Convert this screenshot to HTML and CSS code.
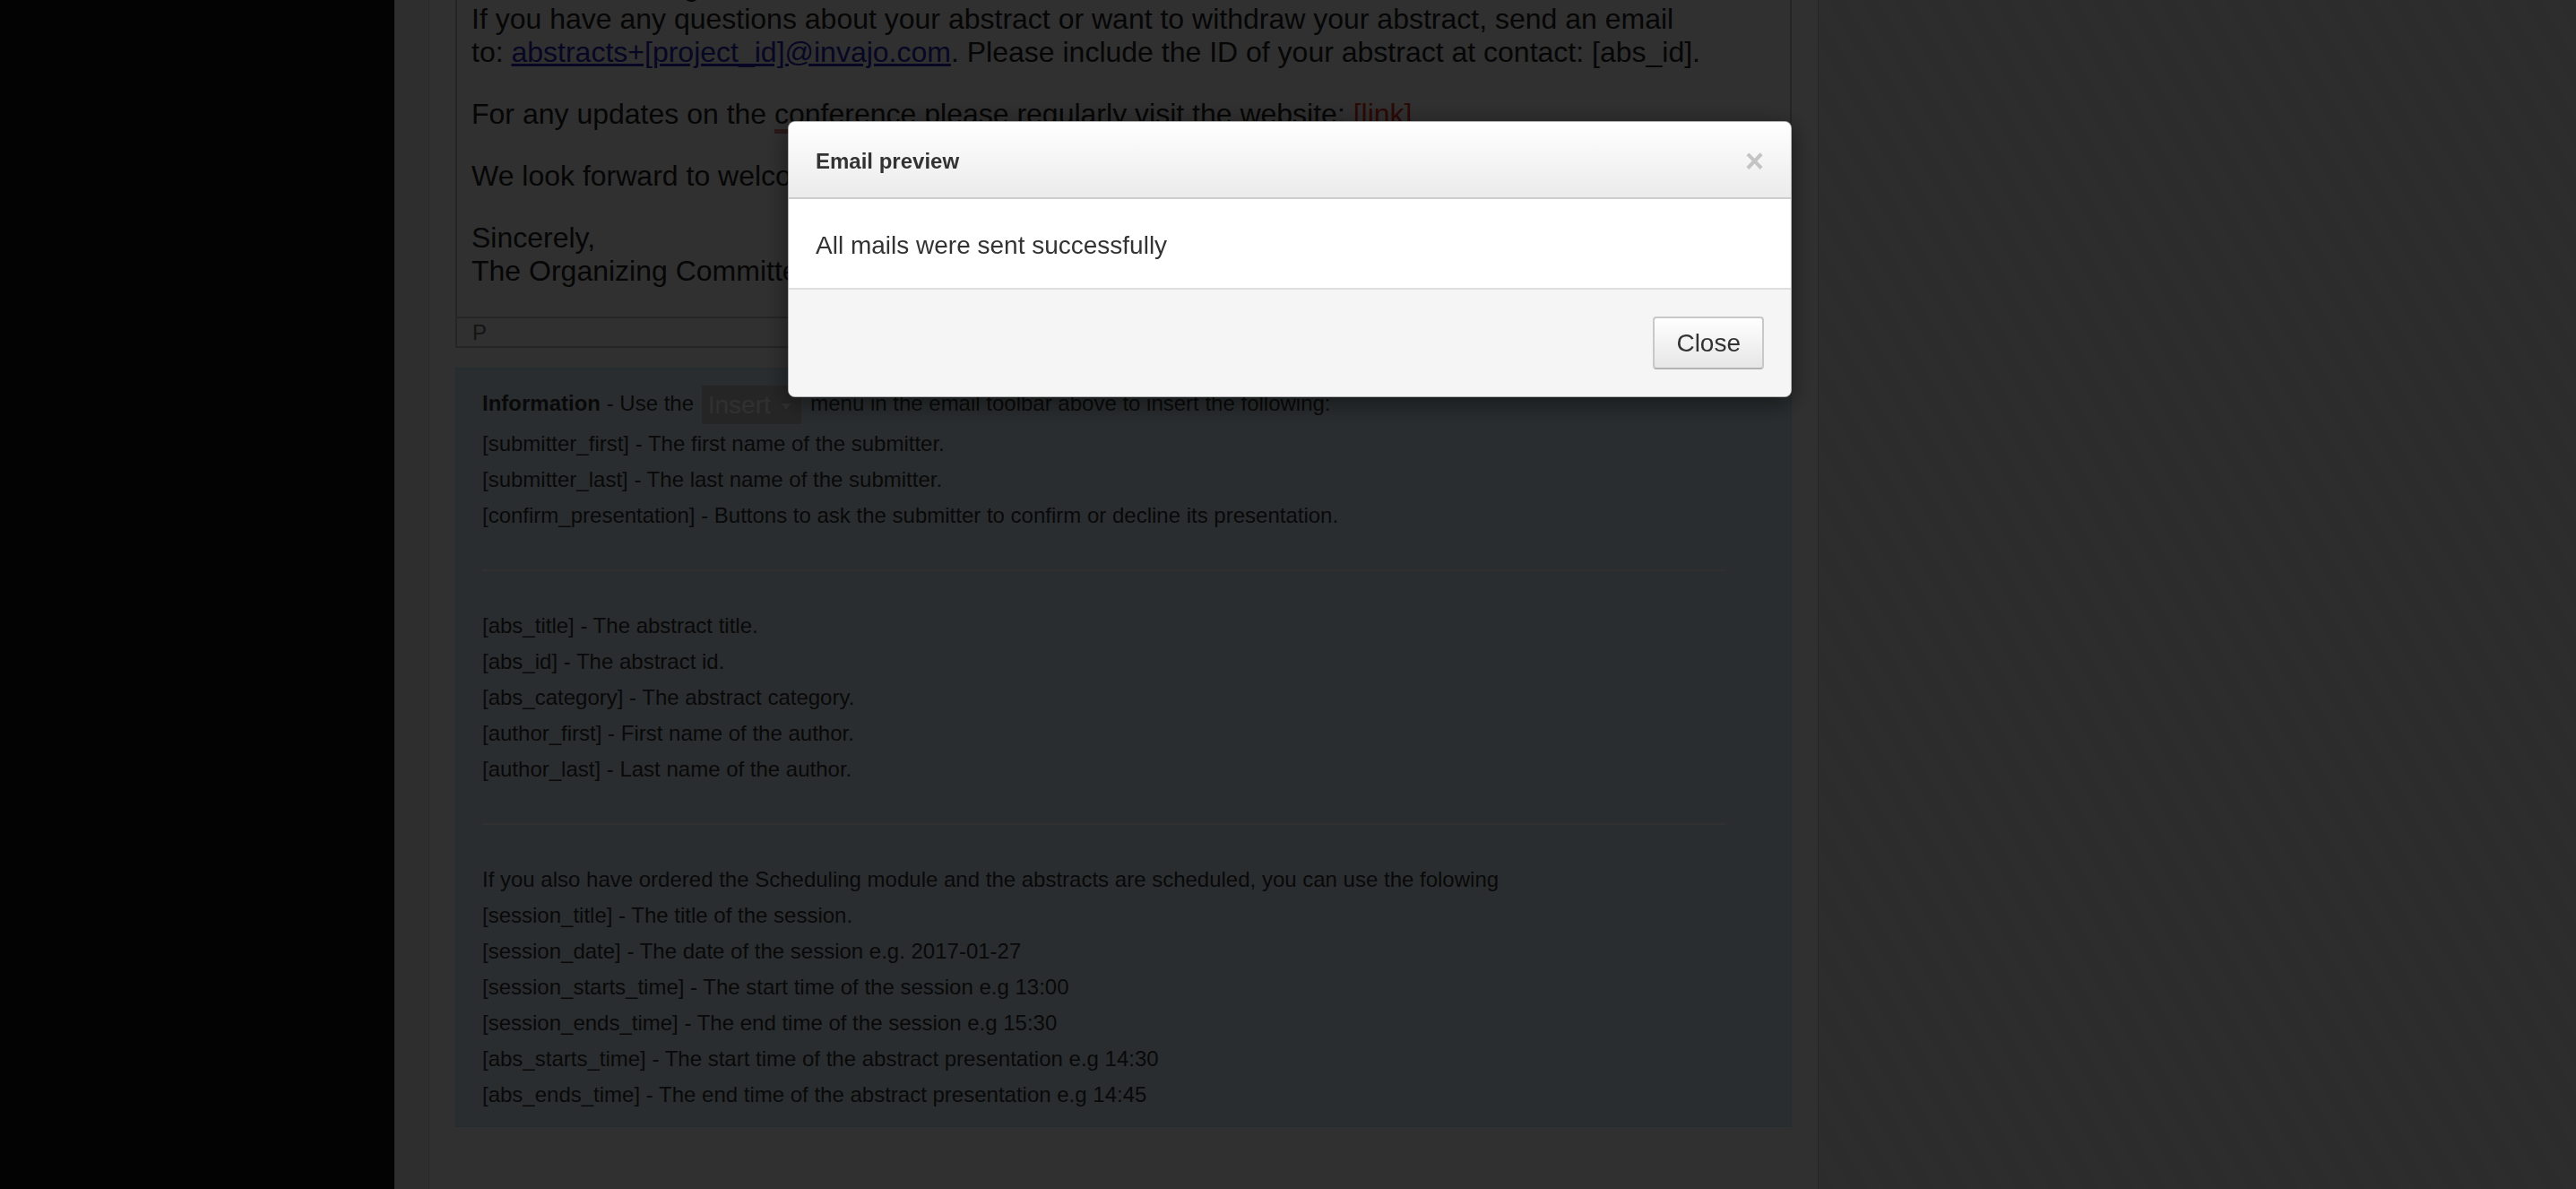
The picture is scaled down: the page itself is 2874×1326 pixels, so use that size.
FILE: index.html
```html
<!DOCTYPE html>
<html lang="en">
<head>
  <meta charset="UTF-8">
  <meta name="viewport" content="width=device-width, initial-scale=1.0">
  <title>Abstract emails</title>
  <link rel="stylesheet" href="styles.css">
</head>
<body>
<div class="layout">
  <aside class="sidebar"></aside>
  <div class="side-strip"></div>

  <main class="main">
    <div class="page">
      <div class="editor">
        <div class="editor-toolbar"></div>
        <div class="editor-body">
          <p>Dear [submitter_first],</p>
          <p>Thank you for submitting your abstract to our conference.<br>
            Final results are given at the conference.<br>
            If you have any questions about your abstract or want to withdraw your abstract, send an email<br>
            to: <a href="#" class="mail-link">abstracts+[project_id]@invajo.com</a>. Please include the ID of your abstract at contact: [abs_id].</p>
          <p>For any updates on the <span class="spell">conference</span> please regularly visit the website: <a href="#" class="red-link">[link]</a></p>
          <p>We look forward to welcoming you at the conference.</p>
          <p>Sincerely,<br>The Organizing Committee</p>
        </div>
        <div class="editor-status">P</div>
      </div>

      <div class="info-box">
        <div class="info-line info-head"><b>Information</b> - Use the <span class="insert-btn">Insert <span class="caret"></span></span> menu in the email toolbar above to insert the following:</div>
        <div class="info-line">[submitter_first] - The first name of the submitter.</div>
        <div class="info-line">[submitter_last] - The last name of the submitter.</div>
        <div class="info-line">[confirm_presentation] - Buttons to ask the submitter to confirm or decline its presentation.</div>
        <hr class="info-divider">
        <div class="info-line">[abs_title] - The abstract title.</div>
        <div class="info-line">[abs_id] - The abstract id.</div>
        <div class="info-line">[abs_category] - The abstract category.</div>
        <div class="info-line">[author_first] - First name of the author.</div>
        <div class="info-line">[author_last] - Last name of the author.</div>
        <hr class="info-divider">
        <div class="info-line">If you also have ordered the Scheduling module and the abstracts are scheduled, you can use the folowing</div>
        <div class="info-line">[session_title] - The title of the session.</div>
        <div class="info-line">[session_date] - The date of the session e.g. 2017-01-27</div>
        <div class="info-line">[session_starts_time] - The start time of the session e.g 13:00</div>
        <div class="info-line">[session_ends_time] - The end time of the session e.g 15:30</div>
        <div class="info-line">[abs_starts_time] - The start time of the abstract presentation e.g 14:30</div>
        <div class="info-line">[abs_ends_time] - The end time of the abstract presentation e.g 14:45</div>
      </div>
    </div>
  </main>

  <div class="outer-bg"></div>
</div>

<div class="modal-backdrop"></div>

<div class="modal-wrap">
  <div class="modal">
    <div class="modal-header">
      <h3 class="modal-title">Email preview</h3>
      <span class="modal-close">&times;</span>
    </div>
    <div class="modal-body">All mails were sent successfully</div>
    <div class="modal-footer">
      <button class="btn">Close</button>
    </div>
  </div>
</div>
</body>
</html>
```

FILE: styles.css
```css
* {
  box-sizing: border-box;
  margin: 0;
  padding: 0;
}
:root {
  --text-color: #333333;
  --editor-text: #222222;
  --editor-border: #c2c2c2;
  --info-bg: #d9edf7;
  --info-border: #bce8f1;
  --white: #ffffff;
}

html, body {
  height: 100%;
}

body {
  font-family: "Liberation Sans", Arial, Helvetica, sans-serif;
  color: var(--text-color);
  background-color: #ededed;
  overflow: hidden;
}

.layout {
  display: flex;
  height: 100vh;
}

.sidebar {
  flex: 0 0 440px;
  background-color: #101010;
}

.side-strip {
  flex: 0 0 39px;
  background-color: #f2f2f2;
  border-right: 1px solid #d0d0d0;
}

.main {
  flex: 0 0 1550px;
  background-color: var(--white);
  border-right: 1px solid #c8c8c8;
  padding: 0 29px;
}

/* page is scrolled down, editor top is out of view */
.page {
  margin-top: -220px;
}

.outer-bg {
  flex: 1;
  background: repeating-linear-gradient(60deg, #ebebeb 0 16px, #ededed 16px 32px);
}

/* Email editor */
.editor {
  border: 2px solid var(--editor-border);
  background-color: #fcfcfc;
}

.editor-toolbar {
  height: 46px;
  border-bottom: 2px solid var(--editor-border);
}

.editor-body {
  display: flow-root;
  padding: 0 16px;
  font-size: 32px;
  line-height: 37px;
  color: var(--editor-text);
}

.editor-body p {
  margin: 32px 0;
}

.mail-link {
  color: #2a26b8;
}

.red-link {
  color: #e0301e;
  text-decoration: none;
}

.spell {
  text-decoration: underline;
  text-decoration-color: #e08080;
  text-decoration-thickness: 5px;
  text-underline-offset: 6px;
}

.editor-status {
  height: 33px;
  border-top: 2px solid var(--editor-border);
  padding-left: 17px;
  font-size: 24px;
  line-height: 31px;
  color: #6a6a6a;
}

/* Placeholder help */
.info-box {
  margin-top: 22px;
  background-color: var(--info-bg);
  border: 1px solid var(--info-border);
  padding: 19px 30px 15px 29px;
  font-size: 24px;
  color: var(--text-color);
}

.info-line {
  line-height: 40px;
  white-space: nowrap;
}

.info-head {
  height: 45px;
}

.insert-btn {
  display: inline-block;
  vertical-align: top;
  height: 43px;
  line-height: 43px;
  padding: 0 12px 0 7px;
  margin: 0 4px 0 2px;
  font-size: 28px;
  background-color: #c6c6c6;
  color: #ffffff;
}

.caret {
  display: inline-block;
  vertical-align: middle;
  margin-left: 4px;
  border-top: 7px solid #ffffff;
  border-left: 5px solid transparent;
  border-right: 5px solid transparent;
}

.info-divider {
  border: 0;
  border-top: 2px solid #ffffff;
  margin: 40px 43px 41px 0;
}

/* Modal */
.modal-backdrop {
  position: fixed;
  inset: 0;
  background-color: rgba(0, 0, 0, 0.81);
  z-index: 10;
}

.modal-wrap {
  position: fixed;
  inset: 0;
  display: flex;
  justify-content: center;
  align-items: flex-start;
  padding: 135px 0 0 4px;
  z-index: 20;
}

.modal {
  width: 1120px;
  background-color: var(--white);
  border: 1px solid rgba(0, 0, 0, 0.3);
  border-radius: 8px;
  box-shadow: 0 6px 28px rgba(0, 0, 0, 0.5);
  overflow: hidden;
}

.modal-header {
  display: flex;
  align-items: center;
  justify-content: space-between;
  height: 86px;
  padding: 4px 30px 0;
  background: linear-gradient(#ffffff, #ebebeb);
  border-bottom: 2px solid #cdcdcd;
}

.modal-title {
  font-size: 24px;
  font-weight: bold;
  color: var(--text-color);
}

.modal-close {
  font-size: 36px;
  font-weight: bold;
  line-height: 1;
  color: #c4c4c4;
  cursor: pointer;
}

.modal-body {
  display: flex;
  align-items: center;
  height: 99px;
  padding: 4px 30px 0;
  font-size: 28px;
  color: var(--text-color);
}

.modal-footer {
  display: flex;
  justify-content: flex-end;
  align-items: center;
  height: 121px;
  padding: 0 30px;
  background-color: #f5f5f5;
  border-top: 2px solid #dedede;
}

.btn {
  height: 59px;
  padding: 0 24px;
  font-family: inherit;
  font-size: 28px;
  color: var(--text-color);
  background: linear-gradient(#ffffff, #e6e6e6);
  border: 2px solid #c8c8c8;
  border-bottom-color: #b3b3b3;
  border-radius: 4px;
  cursor: pointer;
}
```
